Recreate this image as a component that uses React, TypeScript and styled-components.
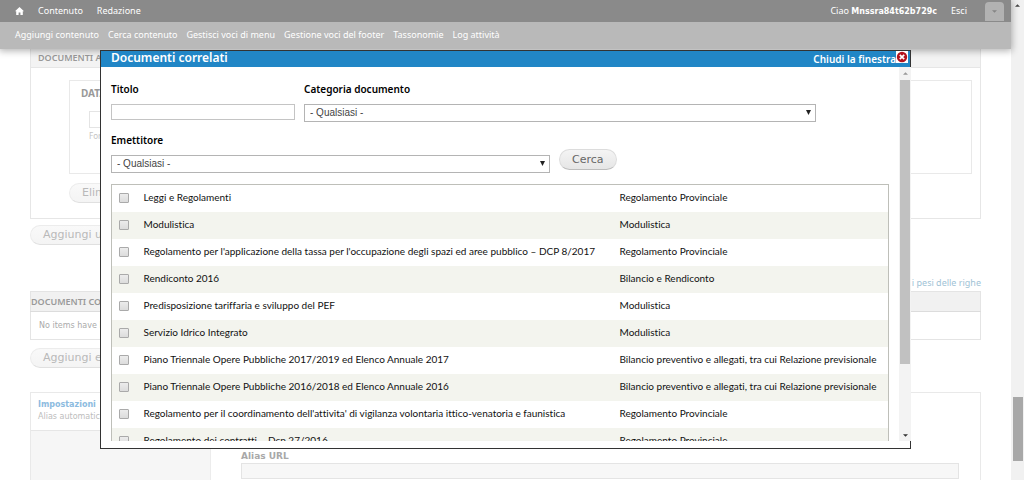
import React from "react";
import styled, { createGlobalStyle } from "styled-components";

const sans = `"Noto Sans", "Open Sans", sans-serif`;
const wide = `"DejaVu Sans", sans-serif`;

const GlobalStyle = createGlobalStyle`
  *, *::before, *::after { box-sizing: border-box; }
  body { margin: 0; background: #fff; font: 9px/12px ${sans}; color: #222; }
  a { text-decoration: none; color: inherit; }
  h1, h2, p, ul { margin: 0; padding: 0; font: inherit; }
  button, input, select { font: inherit; margin: 0; }
`;

const Screen = styled.div`
  position: relative;
  display: flex;
  height: 100vh;
  overflow: hidden;
`;

const Page = styled.div`
  flex: 1;
  min-width: 0;
`;

/* ---------- admin toolbar ---------- */
const Toolbar = styled.header`
  position: relative;
  color: #fff;
  box-shadow: 0 1px 7px 1px rgba(0, 0, 0, 0.3);
`;

const MenuBar = styled.nav`
  display: flex;
  align-items: center;
  gap: 14px;
  height: 22px;
  padding: 0 7px 0 15px;
  background: #8a8a8a;
`;

const HomeIcon = styled.svg`
  display: block;
  width: 9px;
  height: 8px;
`;

const UserLinks = styled.div`
  display: flex;
  align-items: center;
  gap: 14px;
  margin-left: auto;
`;

const UserName = styled.strong`
  font: bold 8px/12px ${wide};
`;

const Toggle = styled.button`
  display: flex;
  align-items: center;
  justify-content: center;
  align-self: flex-end;
  width: 19px;
  height: 19px;
  padding: 0;
  margin-left: 4px;
  border: 0;
  border-radius: 4px 4px 0 0;
  background: #b2b2b2;
`;

const ShortcutBar = styled.nav`
  display: flex;
  align-items: center;
  gap: 9px;
  height: 27px;
  padding: 0 15px 2px;
  background: #b9b9b9;
`;

/* ---------- page behind the dialog ---------- */
const Content = styled.main`
  padding: 0 30px;
  color: #aaa;
`;

const Panel = styled.section`
  height: 170px;
  border: 1px solid #e6e6e6;
  border-top: 0;
`;

const PanelTitle = styled.h2`
  height: 19px;
  padding: 3px 7px;
  background: #f3f3f3;
  border-bottom: 1px solid #e6e6e6;
  color: #999;
  font-size: 9px;
  font-weight: 600;
`;

const FieldBox = styled.div`
  height: 94px;
  margin: 12px 8px 9px 38px;
  padding: 6px 11px;
  border: 1px solid #e9e9e9;
`;

const FieldTitle = styled.p`
  color: #999;
  font: bold 10px/12px ${sans};
`;

const DateField = styled.label`
  display: flex;
  flex-direction: column;
  align-items: flex-start;
  margin: 12px 0 0 8px;
  color: #c4c4c4;
  font-size: 8px;
`;

const DateInput = styled.input`
  width: 80px;
  height: 17px;
  margin-bottom: 2px;
  border: 1px solid #e4e4e4;
  background: #fff;
`;

const PillButton = styled.button<{ $faded?: boolean }>`
  height: ${(p) => (p.$faded ? 20 : 21)}px;
  padding: 0 12px;
  border: 1px solid ${(p) => (p.$faded ? "#ececec" : "#dcdcdc")};
  border-bottom-color: ${(p) => (p.$faded ? "#e0e0e0" : "#bdbdbd")};
  border-radius: 11px;
  background: ${(p) =>
    p.$faded
      ? "linear-gradient(#f9f9f9, #f4f4f4)"
      : "linear-gradient(#f4f4f4, #e6e6e6)"};
  color: ${(p) => (p.$faded ? "#b9b9b9" : "#666")};
  font: 11px/14px ${wide};
  white-space: nowrap;
`;

const Indent = styled.div`
  padding-left: 38px;
`;

const AddRow = styled.div`
  padding-top: 6px;
`;

const WeightLink = styled.a`
  display: block;
  margin-top: 32px;
  padding-bottom: 2px;
  text-align: right;
  color: #9fc3d6;
`;

const ItemsTable = styled.table`
  width: 100%;
  border: 1px solid #e4e4e4;
  border-collapse: collapse;
  margin-bottom: 8px;

  th {
    height: 20px;
    padding: 0;
    text-align: left;
    font-weight: 600;
    color: #999;
    background: #f1f1f1;
    border-bottom: 1px solid #dcdcdc;
  }
  td {
    height: 28px;
    padding: 0 8px;
    font: 8px/12px ${wide};
  }
`;

const Settings = styled.section`
  display: grid;
  grid-template-columns: 180px 1fr;
  margin-top: 24px;
  border: 1px solid #e9e9e9;
`;

const Tabs = styled.div`
  min-height: 200px;
  background: #f6f6f6;
  border-right: 1px solid #ececec;
`;

const Tab = styled.a`
  display: block;
  height: 38px;
  padding: 6px 7px;
  background: #fff;
  border-bottom: 1px solid #e6e6e6;
  color: #bdbdbd;
  font: 8px/12px ${wide};

  strong { display: block; color: #8cbbe0; }
`;

const AliasField = styled.label`
  display: block;
  padding: 56px 21px 0 30px;
  color: #a8a8a8;
  font: bold 9px/14px ${wide};

  input {
    display: block;
    width: 100%;
    height: 16px;
    border: 1px solid #e4e4e4;
    background: #f7f7f7;
  }
`;

/* ---------- scrollbars ---------- */
const PageScroll = styled.div`
  display: flex;
  flex-direction: column;
  align-items: center;
  width: 13px;
  padding: 4px 0 0;
  background: #f1f1f1;
`;

const PageThumb = styled.div`
  width: 10px;
  height: 64px;
  margin: auto 0 19px;
  background: #a8a8a8;
`;

const Arrow = styled.svg`
  display: block;
  width: 5px;
  height: 3px;
`;

/* ---------- dialog ---------- */
const Dialog = styled.div`
  position: absolute;
  inset: 50px 113px 31px 100px;
  display: flex;
  flex-direction: column;
  padding-bottom: 7px;
  border: 1px solid #333;
  background: #fff;
`;

const TitleBar = styled.div`
  display: flex;
  justify-content: space-between;
  height: 16px;
  padding: 0 2px 0 10px;
  background: #2186c6;
  color: #fff;
`;

const DialogTitle = styled.h1`
  font: 600 12px/14px ${sans};
`;

const CloseLink = styled.a`
  display: flex;
  align-items: flex-start;
  font: 600 10px/16px ${sans};

  svg { display: block; width: 12px; height: 12px; }
`;

const DialogBody = styled.div`
  display: flex;
  flex: 1;
  min-height: 0;
  margin-right: -1px;
`;

const Frame = styled.div`
  flex: 1;
  min-width: 0;
  overflow: hidden;
  padding: 15px 10px 0;
`;

const DialogScroll = styled.div`
  display: flex;
  flex-direction: column;
  align-items: center;
  width: 12px;
  padding: 5px 0 4px;
  background: #f3f3f3;
`;

const DialogThumb = styled.div`
  width: 10px;
  height: 284px;
  margin: 5px 0 auto;
  background: #c1c1c1;
`;

const FormRow = styled.form`
  display: flex;
  flex-wrap: wrap;
  column-gap: 9px;
  row-gap: 11px;
  margin-bottom: 11px;
`;

const Field = styled.label<{ $width: string }>`
  flex: 0 0 ${(p) => p.$width};
  color: #000;
  font: 600 10px/14px ${sans};
`;

const TextInput = styled.input`
  display: block;
  width: 100%;
  height: 16px;
  margin-top: 8px;
  border: 1px solid #c4c4c4;
  background: #fff;
`;

const SelectBox = styled.span`
  position: relative;
  display: block;
  margin-top: 8px;

  select {
    display: block;
    width: 100%;
    height: 18px;
    padding: 0 5px;
    appearance: none;
    border: 1px solid #b4b4b4;
    border-radius: 0;
    background: #fff;
    color: #444;
    font: 10px/14px "Liberation Sans", sans-serif;
  }
  svg {
    position: absolute;
    right: 5px;
    top: 6px;
    width: 5px;
    height: 5px;
  }
`;

const SearchCell = styled.div`
  padding-top: 16px;
`;

const Results = styled.table`
  width: 100%;
  border: 1px solid #bebfb9;
  border-collapse: collapse;
  color: #111;

  tr { height: 27px; }
  tr:nth-child(even) { background: #f3f4ee; }
  td {
    padding: 0 0 2px;
    white-space: nowrap;
    font: 10px/14px Lato, sans-serif;
    font-variant-ligatures: none;
  }
  td:first-child { width: 32px; padding: 0 0 0 7px; }
  td:last-child { width: 269px; }
`;

const Check = styled.input`
  display: block;
  width: 10px;
  height: 10px;
  appearance: none;
  border: 1px solid #aaa;
  border-radius: 1px;
  background: linear-gradient(#ececec, #dcdcdc);

  &:checked { background: #2186c6; }
`;

const shortcuts = [
  "Aggiungi contenuto",
  "Cerca contenuto",
  "Gestisci voci di menu",
  "Gestione voci del footer",
  "Tassonomie",
  "Log attività",
];

const documents: [string, string][] = [
  ["Leggi e Regolamenti", "Regolamento Provinciale"],
  ["Modulistica", "Modulistica"],
  ["Regolamento per l'applicazione della tassa per l'occupazione degli spazi ed aree pubblico – DCP 8/2017", "Regolamento Provinciale"],
  ["Rendiconto 2016", "Bilancio e Rendiconto"],
  ["Predisposizione tariffaria e sviluppo del PEF", "Modulistica"],
  ["Servizio Idrico Integrato", "Modulistica"],
  ["Piano Triennale Opere Pubbliche 2017/2019 ed Elenco Annuale 2017", "Bilancio preventivo e allegati, tra cui Relazione previsionale"],
  ["Piano Triennale Opere Pubbliche 2016/2018 ed Elenco Annuale 2016", "Bilancio preventivo e allegati, tra cui Relazione previsionale"],
  ["Regolamento per il coordinamento dell'attivita' di vigilanza volontaria ittico-venatoria e faunistica", "Regolamento Provinciale"],
  ["Regolamento dei contratti – Dcp 27/2016", "Regolamento Provinciale"],
];

function Triangle({ up, color }: { up?: boolean; color: string }) {
  return (
    <Arrow viewBox="0 0 6 3" aria-hidden="true">
      <path d={up ? "M0 3L3 0L6 3Z" : "M0 0L3 3L6 0Z"} fill={color} />
    </Arrow>
  );
}

function AnySelect() {
  return (
    <SelectBox>
      <select>
        <option>- Qualsiasi -</option>
      </select>
      <svg viewBox="0 0 5 5" aria-hidden="true">
        <path d="M0 0H5L2.5 5Z" fill="#222" />
      </svg>
    </SelectBox>
  );
}

export default function App() {
  return (
    <Screen>
      <GlobalStyle />
      <Page>
        <Toolbar>
          <MenuBar>
            <a href="#home" aria-label="Home">
              <HomeIcon viewBox="0 0 9 8">
                <path d="M4.5 0L9 4.3H7.8V8H5.4V5.4H3.6V8H1.2V4.3H0Z" fill="#fff" />
              </HomeIcon>
            </a>
            <a href="#contenuto">Contenuto</a>
            <a href="#redazione">Redazione</a>
            <UserLinks>
              <a href="#utente">
                Ciao <UserName>Mnssra84t62b729c</UserName>
              </a>
              <a href="#esci">Esci</a>
              <Toggle aria-label="Scorciatoie">
                <Triangle color="#858585" />
              </Toggle>
            </UserLinks>
          </MenuBar>
          <ShortcutBar>
            {shortcuts.map((s) => (
              <a href="#shortcut" key={s}>
                {s}
              </a>
            ))}
          </ShortcutBar>
        </Toolbar>
        <Content>
          <Panel>
            <PanelTitle>DOCUMENTI ALLEGATI</PanelTitle>
            <FieldBox>
              <FieldTitle>DATA</FieldTitle>
              <DateField>
                <DateInput />
                Formato
              </DateField>
            </FieldBox>
            <Indent>
              <PillButton $faded>Elimina</PillButton>
            </Indent>
          </Panel>
          <AddRow>
            <PillButton $faded>Aggiungi un altro</PillButton>
          </AddRow>
          <WeightLink href="#pesi">Mostra i pesi delle righe</WeightLink>
          <ItemsTable>
            <thead>
              <tr>
                <th>DOCUMENTI CORRELATI</th>
              </tr>
            </thead>
            <tbody>
              <tr>
                <td>No items have been added</td>
              </tr>
            </tbody>
          </ItemsTable>
          <PillButton $faded>Aggiungi elementi</PillButton>
          <Settings>
            <Tabs>
              <Tab href="#alias">
                <strong>Impostazioni</strong>
                Alias automatico
              </Tab>
            </Tabs>
            <AliasField>
              Alias URL
              <input />
            </AliasField>
          </Settings>
        </Content>
      </Page>
      <PageScroll>
        <Triangle up color="#444" />
        <PageThumb />
      </PageScroll>

      <Dialog role="dialog" aria-label="Documenti correlati">
        <TitleBar>
          <DialogTitle>Documenti correlati</DialogTitle>
          <CloseLink href="#chiudi">
            Chiudi la finestra
            <svg viewBox="0 0 12 12" aria-hidden="true">
              <rect width="12" height="12" fill="#fff" />
              <circle cx="6" cy="6" r="5.2" fill="#b3121d" />
              <path d="M3.8 3.8L8.2 8.2M8.2 3.8L3.8 8.2" stroke="#fff" strokeWidth="1.7" />
            </svg>
          </CloseLink>
        </TitleBar>
        <DialogBody>
          <Frame>
            <FormRow>
              <Field $width="184px">
                Titolo
                <TextInput />
              </Field>
              <Field $width="512px">
                Categoria documento
                <AnySelect />
              </Field>
              <Field $width="439px">
                Emettitore
                <AnySelect />
              </Field>
              <SearchCell>
                <PillButton type="button">Cerca</PillButton>
              </SearchCell>
            </FormRow>
            <Results>
              <tbody>
                {documents.map(([title, category]) => (
                  <tr key={title}>
                    <td>
                      <Check type="checkbox" aria-label={title} />
                    </td>
                    <td>{title}</td>
                    <td>{category}</td>
                  </tr>
                ))}
              </tbody>
            </Results>
          </Frame>
          <DialogScroll>
            <Triangle up color="#999" />
            <DialogThumb />
            <Triangle color="#333" />
          </DialogScroll>
        </DialogBody>
      </Dialog>
    </Screen>
  );
}
